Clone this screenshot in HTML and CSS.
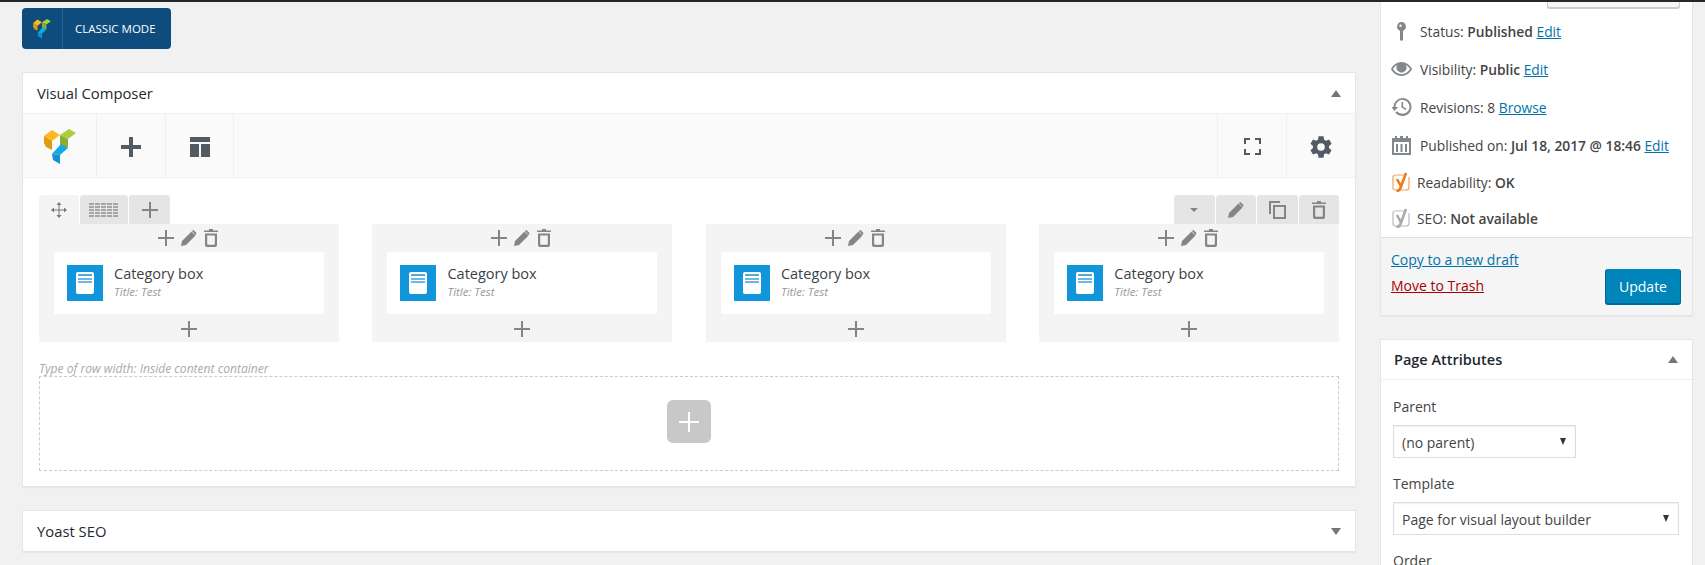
FILE: index.html
```html
<!DOCTYPE html>
<html lang="en">
<head>
<meta charset="utf-8">
<title>Edit Page</title>
<link rel="stylesheet" href="styles.css">
</head>
<body>
<svg class="defs" width="0" height="0" aria-hidden="true">
  <symbol id="logo" viewBox="0 0 32 36">
    <polygon points="0,7 8,1 16,6 8,12" fill="#fbb81f"/>
    <polygon points="0,7 8,12 8,21 2,18 0,14" fill="#dc9c14"/>
    <polygon points="16,6 25,0 32,4 24,10" fill="#a9cf3c"/>
    <polygon points="16,6 24,10 24,18 16,20" fill="#8bae30"/>
    <polygon points="8,25 17,15 24,19 16,26" fill="#12a9e8"/>
    <polygon points="8,25 16,26 16,35 9,31" fill="#1491d0"/>
  </symbol>
  <symbol id="plus" viewBox="0 0 16 16"><path d="M7 0h2v7h7v2H9v7H7V9H0V7h7z" fill="currentColor"/></symbol>
  <symbol id="pencil" viewBox="0 0 16 16"><path d="M0 16l1-5L10.500 1.500l4 4L5 15zM11.500.5l1-.5 3 3-.5 1.500-.5.500-3.500-4z" fill="currentColor"/></symbol>
  <symbol id="trash" viewBox="0 0 14 18"><path d="M5 0h4v1.500h5V3H0V1.500h5zM1 4.500h12V16a2 2 0 0 1-2 2H3a2 2 0 0 1-2-2zm2.200 2V15a.8.800 0 0 0 .8.800h6a.8.800 0 0 0 .8-.8V6.500z" fill="currentColor" fill-rule="evenodd"/></symbol>
  <symbol id="copy" viewBox="0 0 17 18"><path d="M0 0h11v2H2v11H0zM4 4h13v14H4zm2 2v10h9V6z" fill="currentColor" fill-rule="evenodd"/></symbol>
  <symbol id="doc" viewBox="0 0 36 36"><rect width="36" height="36" fill="#1296db"/><rect x="9" y="7" width="18" height="22" rx="2" fill="#fff"/><rect x="11" y="9" width="14" height="2" fill="#4fa9e0"/><rect x="11" y="13" width="14" height="2" fill="#6cb9e6"/><rect x="11" y="16" width="14" height="2" fill="#6cb9e6"/></symbol>
  <symbol id="yoast" viewBox="0 0 19 20"><path d="M3 3h10M17 5v10a3 3 0 0 1-3 3H3a2 2 0 0 1-2-2V5a2 2 0 0 1 2-2" fill="none" stroke="currentColor" stroke-width="1.200"/><path d="M5 7l4 7.500M14 1L8.500 16Q7.500 19 4.500 19" fill="none" stroke="var(--y)" stroke-width="2.600"/></symbol>
</svg>

<div class="topbar"></div>
<div class="page">
  <main class="main">
    <div class="classic">
      <span class="classic-logo"><svg class="ic-classic"><use href="#logo"/></svg></span>
      <span class="classic-text">CLASSIC MODE</span>
    </div>

    <section class="box vc">
      <header class="box-head"><h2>Visual Composer</h2><span class="tri-up"></span></header>
      <div class="toolbar">
        <div class="tool tool-logo"><svg class="ic-logo"><use href="#logo"/></svg></div>
        <div class="tool tool-add"><svg class="ic-tool" viewBox="0 0 20 20"><path d="M8 0h4v8h8v4h-8v8H8v-8H0V8h8z" fill="currentColor"/></svg></div>
        <div class="tool tool-tpl"><svg class="ic-tool" viewBox="0 0 20 20"><path d="M0 0h20v5H0zM0 7h9v13H0zM11 7h9v13h-9z" fill="currentColor"/></svg></div>
        <div class="tool-spacer"></div>
        <div class="tool tool-full"><svg class="ic-full" viewBox="0 0 17 17"><path d="M0 6V0h6v2H2v4zM11 0h6v6h-2V2h-4zM17 11v6h-6v-2h4v-4zM6 17H0v-6h2v4h4z" fill="currentColor"/></svg></div>
        <div class="tool tool-gear"><svg class="ic-gear" viewBox="0 0 24 24"><path fill="currentColor" fill-rule="evenodd" d="M19.400 13a7.600 7.600 0 0 0 0-2l2.400-1.900-2.300-4-2.900 1.200a7.700 7.700 0 0 0-1.700-1L14.300 2H9.700l-.5 3.300a7.700 7.700 0 0 0-1.700 1L4.600 5.100l-2.300 4L4.600 11a7.600 7.600 0 0 0 0 2l-2.300 1.900 2.300 4 2.900-1.200a7.700 7.700 0 0 0 1.700 1l.5 3.300h4.600l.5-3.300a7.700 7.700 0 0 0 1.700-1l2.900 1.200 2.300-4zM12 15.500a3.500 3.500 0 1 1 0-7 3.500 3.500 0 0 1 0 7z"/></svg></div>
      </div>
      <div class="vc-body">
        <div class="row-tabs">
          <span class="tab tab-move"><svg class="ic-move" viewBox="0 0 16 16"><path d="M8 0l2.500 3H8.500v4.500H13V5.500L16 8l-3 2.500v-2H8.500V13h2L8 16l-2.500-3h2V8.500H3v2L0 8l3-2.500v2h4.500V3h-2z" fill="currentColor"/></svg></span>
          <span class="tab tab-cols"><span class="grid-glyph"></span></span>
          <span class="tab tab-plus"><svg class="ic-16"><use href="#plus"/></svg></span>
          <span class="tabs-gap"></span>
          <span class="tab tab-r"><span class="caret"></span></span>
          <span class="tab tab-r"><svg class="ic-16"><use href="#pencil"/></svg></span>
          <span class="tab tab-r"><svg class="ic-copy"><use href="#copy"/></svg></span>
          <span class="tab tab-r"><svg class="ic-trash"><use href="#trash"/></svg></span>
        </div>
        <div class="columns">
          <div class="col">
            <div class="col-ctrl"><svg class="ic-16"><use href="#plus"/></svg><svg class="ic-16"><use href="#pencil"/></svg><svg class="ic-trash"><use href="#trash"/></svg></div>
            <div class="card"><svg class="ic-doc"><use href="#doc"/></svg><div class="card-text"><div class="card-title">Category box</div><div class="card-sub">Title: Test</div></div></div>
            <div class="col-add"><svg class="ic-16"><use href="#plus"/></svg></div>
          </div>
          <div class="col">
            <div class="col-ctrl"><svg class="ic-16"><use href="#plus"/></svg><svg class="ic-16"><use href="#pencil"/></svg><svg class="ic-trash"><use href="#trash"/></svg></div>
            <div class="card"><svg class="ic-doc"><use href="#doc"/></svg><div class="card-text"><div class="card-title">Category box</div><div class="card-sub">Title: Test</div></div></div>
            <div class="col-add"><svg class="ic-16"><use href="#plus"/></svg></div>
          </div>
          <div class="col">
            <div class="col-ctrl"><svg class="ic-16"><use href="#plus"/></svg><svg class="ic-16"><use href="#pencil"/></svg><svg class="ic-trash"><use href="#trash"/></svg></div>
            <div class="card"><svg class="ic-doc"><use href="#doc"/></svg><div class="card-text"><div class="card-title">Category box</div><div class="card-sub">Title: Test</div></div></div>
            <div class="col-add"><svg class="ic-16"><use href="#plus"/></svg></div>
          </div>
          <div class="col">
            <div class="col-ctrl"><svg class="ic-16"><use href="#plus"/></svg><svg class="ic-16"><use href="#pencil"/></svg><svg class="ic-trash"><use href="#trash"/></svg></div>
            <div class="card"><svg class="ic-doc"><use href="#doc"/></svg><div class="card-text"><div class="card-title">Category box</div><div class="card-sub">Title: Test</div></div></div>
            <div class="col-add"><svg class="ic-16"><use href="#plus"/></svg></div>
          </div>
        </div>
        <div class="row-note">Type of row width: Inside content container</div>
        <div class="empty-row"><span class="add-big"><svg class="ic-20" viewBox="0 0 20 20"><path d="M9 0h2v9h9v2h-9v9H9v-9H0V9h9z" fill="currentColor"/></svg></span></div>
      </div>
    </section>

    <section class="box yoast-box">
      <header class="box-head box-head-last"><h2>Yoast SEO</h2><span class="tri-down"></span></header>
    </section>
  </main>

  <aside class="side">
    <section class="box publish">
      <div class="stub-wrap"><span class="stub"></span></div>
      <div class="mrow"><svg class="mi mi-key" viewBox="0 0 10 19"><path fill-rule="evenodd" d="M5 0a4.500 4.500 0 0 1 1.500 8.700V18l-1.500 1-1.500-1V8.700A4.500 4.500 0 0 1 5 0zM4 2.500a1.200 1.200 0 1 0 0 2.400 1.200 1.200 0 0 0 0-2.400z" fill="#82878c"/></svg><span>Status: <b>Published</b> <a href="#">Edit</a></span></div>
      <div class="mrow"><svg class="mi mi-eye" viewBox="0 0 21 14"><path fill="#82878c" fill-rule="evenodd" d="M10.500 0C15 0 19 3 21 7c-2 4-6 7-10.500 7S2 11 0 7c2-4 6-7 10.500-7zM2 7c1.700 3 5 5.200 8.500 5.200S17.300 10 19 7c-1-1.700-2.500-3.100-4.200-4a5 5 0 1 1-8.600 0C4.500 3.900 3 5.300 2 7z"/></svg><span>Visibility: <b>Public</b> <a href="#">Edit</a></span></div>
      <div class="mrow"><svg class="mi mi-clock" viewBox="0 0 20 20"><path fill="#82878c" d="M11 1a9 9 0 1 1-7.200 14.400l1.700-1.200A7 7 0 1 0 4 10h2.500L3 14 0 10h2a9 9 0 0 1 9-9zm-1 4h1.600v4.700l3.400 2-.8 1.300L10 10.500z"/></svg><span>Revisions: 8 <a href="#">Browse</a></span></div>
      <div class="mrow"><svg class="mi mi-cal" viewBox="0 0 19 19"><path fill="#82878c" fill-rule="evenodd" d="M3 0h2v2h3V0h3v2h3V0h2v2h3v17H0V2h3zM2 6v11h15V6zm2 2h2v8H4zm4.500 0h2v8h-2zM13 8h2v8h-2z"/></svg><span>Published on: <b>Jul 18, 2017 @ 18:46</b> <a href="#">Edit</a></span></div>
      <div class="mrow mrow-y y-orange"><svg class="mi mi-y"><use href="#yoast"/></svg><span>Readability: <b>OK</b></span></div>
      <div class="mrow mrow-y y-grey"><svg class="mi mi-y"><use href="#yoast"/></svg><span>SEO: <b>Not available</b></span></div>
      <div class="pub-foot">
        <div class="pub-links"><a href="#">Copy to a new draft</a><a href="#" class="trash">Move to Trash</a></div>
        <span class="update">Update</span>
      </div>
    </section>

    <section class="box attrs">
      <header class="box-head"><h2>Page Attributes</h2><span class="tri-up"></span></header>
      <div class="attrs-body">
        <div class="lbl">Parent</div>
        <div class="sel sel-s"><span>(no parent)</span><span class="sel-arrow"></span></div>
        <div class="lbl">Template</div>
        <div class="sel sel-w"><span>Page for visual layout builder</span><span class="sel-arrow"></span></div>
        <div class="lbl">Order</div>
      </div>
    </section>
  </aside>
</div>
</body>
</html>
```

FILE: styles.css
```css
* { box-sizing: border-box; }
html, body { margin: 0; height: 565px; overflow: hidden; }
body { background: #f1f1f1; font-family: "Open Sans", "Noto Sans", sans-serif; font-size: 14px; color: #444; }
.defs { position: absolute; }
svg { display: block; flex: none; }
a { color: #0073aa; }

.topbar { height: 2px; background: #23282d; }
.page { display: flex; align-items: flex-start; height: 563px; overflow: hidden; padding-left: 22px; }
.main { width: 1334px; padding-top: 6px; }
.side { width: 313px; margin-left: 24px; }

.classic { display: flex; align-items: center; width: 149px; height: 41px; background: #0f4c7e; border-radius: 4px; color: #fff; }
.classic-logo { width: 41px; height: 41px; border-right: 1px solid #2a6596; display: flex; align-items: center; justify-content: center; }
.ic-classic { width: 18px; height: 20px; }
.classic-text { font-size: 11.500px; padding-left: 12px; white-space: nowrap; }

.box { background: #fff; border: 1px solid #e5e5e5; box-shadow: 0 1px 1px rgba(0,0,0,.04); }
.box-head { height: 41px; display: flex; align-items: center; justify-content: space-between; padding: 0 14px; border-bottom: 1px solid #eee; }
.box-head-last { height: 40px; border-bottom: 0; }
.box-head h2 { margin: 0; font-size: 14.800px; font-weight: 500; color: #23282d; }
.attrs .box-head { height: 40px; padding-left: 13px; }
.attrs .box-head h2 { font-size: 14.500px; font-weight: 600; }
.tri-up { width: 0; height: 0; border: 5px solid transparent; border-top: 0; border-bottom: 7px solid #72777c; }
.tri-down { width: 0; height: 0; border: 5px solid transparent; border-bottom: 0; border-top: 7px solid #72777c; }

.vc { margin-top: 23px; height: 415px; }
.toolbar { display: flex; height: 64px; background: #fafafa; border-bottom: 1px solid #f0f0f0; }
.tool { display: flex; align-items: center; justify-content: center; width: 69px; height: 63px; padding-top: 2px; border-right: 1px solid #f0f0f0; color: #525b64; }
.tool-logo { width: 74px; }
.tool-tpl { width: 68px; }
.tool-spacer { flex: 1; border-right: 1px solid #f0f0f0; }
.tool-gear { width: 68px; border-right: 0; }
.ic-logo { width: 32px; height: 36px; }
.ic-tool { width: 20px; height: 20px; }
.ic-full { width: 17px; height: 17px; }
.ic-gear { width: 26px; height: 26px; }

.vc-body { padding: 17px 16px 0; }
.row-tabs { display: flex; height: 29px; color: #858585; }
.tab { display: flex; align-items: center; justify-content: center; height: 29px; background: #e5e5e5; border-radius: 3px 3px 0 0; margin-right: 1px; width: 41px; }
.tab-move { width: 40px; background: #f4f4f4; }
.tab-cols { width: 48px; }
.tabs-gap { flex: 1; }
.tab-r { width: 40.500px; }
.tab-r:last-child { margin-right: 0; }
.ic-move { width: 16px; height: 16px; color: #777; }
.ic-16 { width: 16px; height: 16px; }
.ic-trash { width: 14px; height: 18px; }
.ic-copy { width: 17px; height: 18px; }
.grid-glyph { width: 30px; height: 14px; background: repeating-linear-gradient(to right, transparent 0 5px, #e5e5e5 5px 6px), repeating-linear-gradient(to bottom, #a5a5a5 0 2px, transparent 2px 3px); }
.caret { width: 0; height: 0; border: 4px solid transparent; border-bottom: 0; border-top: 4px solid #858585; }

.columns { display: grid; grid-template-columns: repeat(4, 1fr); column-gap: 33.800px; }
.col { height: 118px; background: #f4f4f4; padding: 0 15px; color: #858585; }
.col-ctrl { height: 28px; display: flex; align-items: center; justify-content: center; gap: 7px; padding-right: 2px; }
.card { height: 62px; background: #fff; border-radius: 2px; display: flex; align-items: center; padding-left: 13px; }
.ic-doc { width: 36px; height: 36px; }
.card-text { margin-left: 11px; padding-bottom: 4px; }
.card-title { font-size: 14.500px; line-height: 20px; color: #3c4248; }
.card-sub { font-size: 11.500px; line-height: 15px; font-style: italic; color: #999; }
.col-add { height: 28px; padding-top: 1px; display: flex; align-items: center; justify-content: center; }

.row-note { height: 34px; padding-top: 19px; font-size: 12.100px; line-height: 15px; font-style: italic; color: #aaa; white-space: nowrap; }
.empty-row { height: 95px; padding-bottom: 4px; border: 1px dashed #ccc; display: flex; align-items: center; justify-content: center; }
.add-big { width: 44px; height: 43px; background: #c8c8c8; border-radius: 6px; color: #fff; display: flex; align-items: center; justify-content: center; }
.ic-20 { width: 20px; height: 20px; }

.yoast-box { margin-top: 23px; height: 42px; }

.publish { border-top: 0; height: 314px; font-size: 13.800px; }
.stub-wrap { height: 10px; display: flex; justify-content: flex-end; padding-right: 12px; }
.stub { width: 133px; height: 6px; background: #f7f7f7; border: 1px solid #ccc; border-top: 0; border-radius: 0 0 3px 3px; box-shadow: 0 1px 0 #ccc; }
.mrow { height: 38px; display: flex; align-items: center; padding-left: 10px; white-space: nowrap; }
.mrow > span { margin-left: 8px; }
.mrow b { font-weight: 600; }
.mrow-y { height: 36px; }
.mrow-y > span { margin-left: 6px; }
.mi { width: 21px; }
.mi-key { height: 19px; padding: 0 5px; width: 21px; }
.mi-eye { height: 14px; }
.mi-clock { height: 20px; }
.mi-cal { height: 19px; }
.mi-y { width: 19px; height: 20px; margin-left: 1px; }
.y-orange { --y: #ee7c1b; color: #f5a05a; }
.y-grey { --y: #aaa; color: #bbb; }
.y-orange > span, .y-grey > span { color: #444; }

.pub-foot { height: 78px; margin-top: 1px; background: #f5f5f5; border-top: 1px solid #ddd; display: flex; justify-content: space-between; align-items: flex-start; padding: 12px 11px 0 10px; font-size: 14px; }
.pub-links { display: flex; flex-direction: column; gap: 7px; }
.pub-links a { line-height: 19px; }
.pub-links .trash { color: #a00; }
.update { margin-top: 19px; width: 76px; height: 35px; background: #0085ba; border: 1px solid #006799; border-top-color: #0085ba; border-radius: 3px; box-shadow: 0 1px 0 #006799; color: #fff; display: flex; align-items: center; justify-content: center; }

.attrs { margin-top: 23px; height: 300px; }
.attrs-body { padding: 0 12px; }
.lbl { height: 19px; line-height: 19px; margin-top: 17px; color: #444; }
.sel { height: 33px; margin-top: 9px; border: 1px solid #ddd; display: flex; align-items: center; justify-content: space-between; padding: 0 9px 0 8px; box-shadow: inset 0 1px 2px rgba(0,0,0,.07); }
.sel span:first-child { padding-top: 1px; }
.sel + .lbl { margin-top: 16px; }
.sel-s { width: 183px; }
.sel-w { width: 286px; }
.sel-arrow { width: 0; height: 0; border: 3.500px solid transparent; border-bottom: 0; border-top: 7px solid #333; }
```
